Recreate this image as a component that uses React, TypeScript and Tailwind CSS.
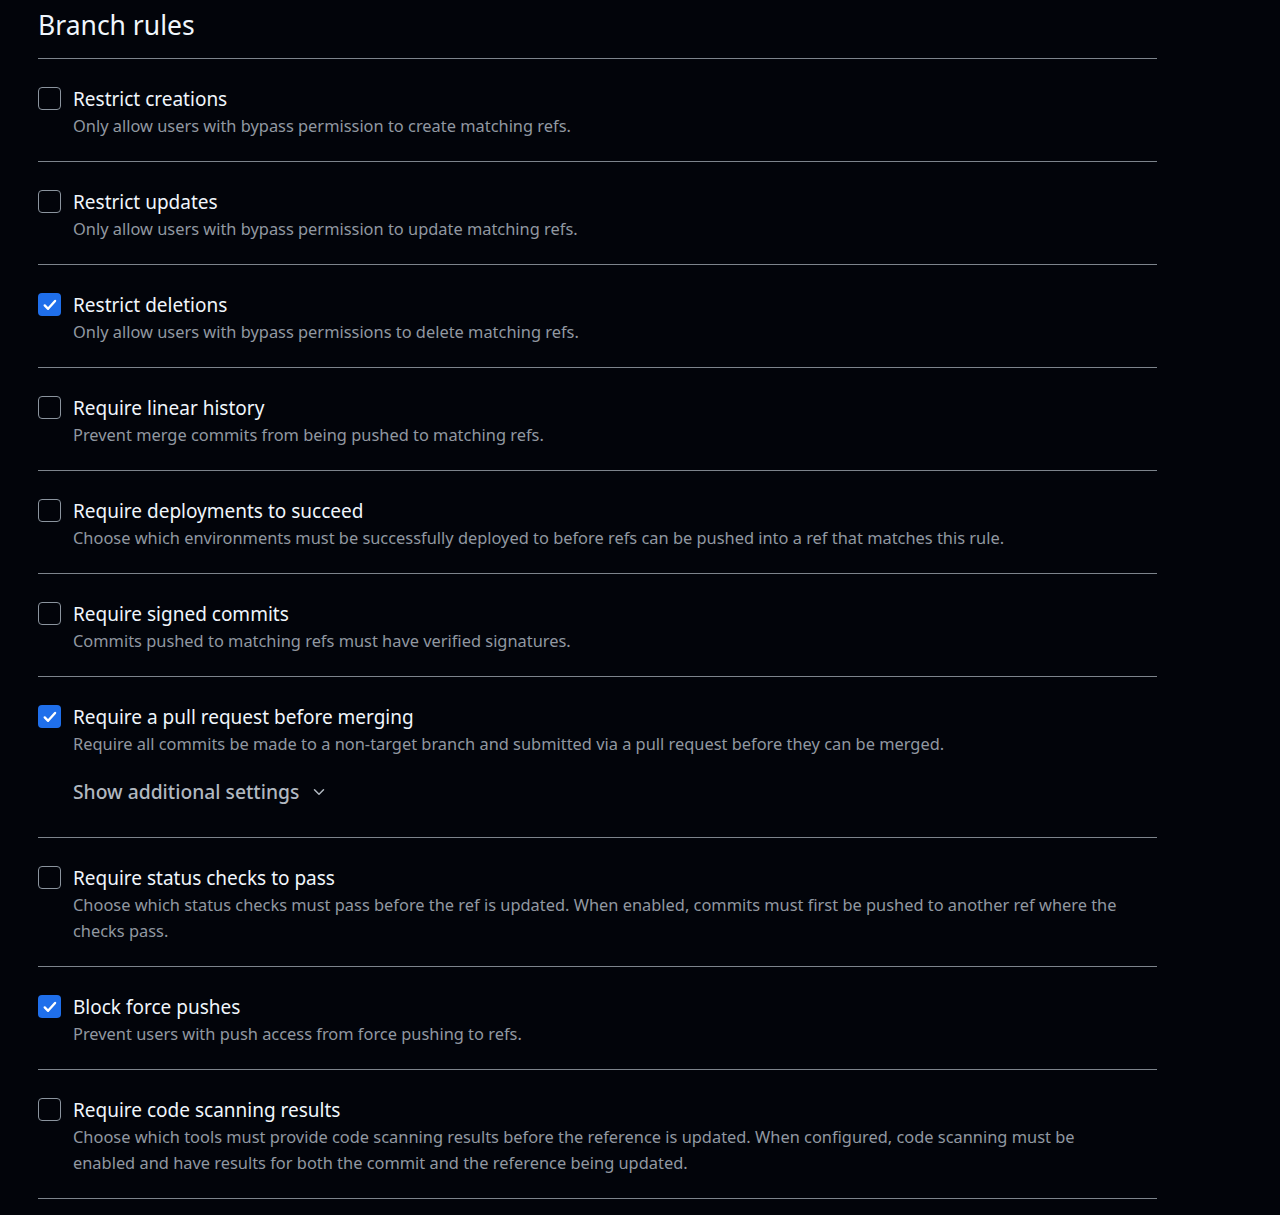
import { ChevronDown } from "lucide-react";

type Rule = {
  title: string;
  description: string;
  checked?: boolean;
  extra?: boolean;
};

const rules: Rule[] = [
  {
    title: "Restrict creations",
    description: "Only allow users with bypass permission to create matching refs.",
  },
  {
    title: "Restrict updates",
    description: "Only allow users with bypass permission to update matching refs.",
  },
  {
    title: "Restrict deletions",
    description: "Only allow users with bypass permissions to delete matching refs.",
    checked: true,
  },
  {
    title: "Require linear history",
    description: "Prevent merge commits from being pushed to matching refs.",
  },
  {
    title: "Require deployments to succeed",
    description:
      "Choose which environments must be successfully deployed to before refs can be pushed into a ref that matches this rule.",
  },
  {
    title: "Require signed commits",
    description: "Commits pushed to matching refs must have verified signatures.",
  },
  {
    title: "Require a pull request before merging",
    description:
      "Require all commits be made to a non-target branch and submitted via a pull request before they can be merged.",
    checked: true,
    extra: true,
  },
  {
    title: "Require status checks to pass",
    description:
      "Choose which status checks must pass before the ref is updated. When enabled, commits must first be pushed to another ref where the checks pass.",
  },
  {
    title: "Block force pushes",
    description: "Prevent users with push access from force pushing to refs.",
    checked: true,
  },
  {
    title: "Require code scanning results",
    description:
      "Choose which tools must provide code scanning results before the reference is updated. When configured, code scanning must be enabled and have results for both the commit and the reference being updated.",
  },
];

function Checkbox({ checked }: { checked?: boolean }) {
  if (checked) {
    return (
      <span className="flex h-[23px] w-[23px] shrink-0 items-center justify-center rounded-[4px] bg-[#1f6feb]">
        <svg viewBox="0 0 16 16" className="h-[18px] w-[18px]" fill="none">
          <path
            d="M3.3 8.4l3 3 6.2-7"
            stroke="#ffffff"
            strokeWidth="2.1"
            strokeLinecap="round"
            strokeLinejoin="round"
          />
        </svg>
      </span>
    );
  }
  return (
    <span className="block h-[23px] w-[23px] shrink-0 rounded-[4px] border-[1.5px] border-[#8b949e]" />
  );
}

function RuleRow({ rule }: { rule: Rule }) {
  return (
    <div className="border-b border-[#7d848c] pt-[26px] pb-[22px]">
      <div className="flex gap-[12px]">
        <div className="pt-[2px]">
          <Checkbox checked={rule.checked} />
        </div>
        <div className="flex-1 pr-[30px]">
          <div className="text-[19px] leading-[28px] text-[#f0f6fc]">{rule.title}</div>
          <div className="text-[16.4px] leading-[26px] text-[#9198a1]">
            {rule.description}
          </div>
          {rule.extra && (
            <button className="mt-[18px] mb-[6px] flex h-[34px] items-center gap-[11px] font-medium text-[19.3px] text-[#b1b8c0]">
              Show additional settings
              <ChevronDown className="h-[18px] w-[18px]" strokeWidth={2} />
            </button>
          )}
        </div>
      </div>
    </div>
  );
}

export default function App() {
  return (
    <div
      className="min-h-[1215px] bg-[#02040a] pl-[38px]"
      style={{ fontFamily: '"Noto Sans", "Open Sans", sans-serif' }}
    >
      <div className="w-[1119px]">
        <h2 className="flex h-[59px] items-center border-b border-[#7d848c] pb-[7px] text-[26.5px] text-[#f0f6fc]">
          Branch rules
        </h2>
        {rules.map((rule) => (
          <RuleRow key={rule.title} rule={rule} />
        ))}
      </div>
    </div>
  );
}
